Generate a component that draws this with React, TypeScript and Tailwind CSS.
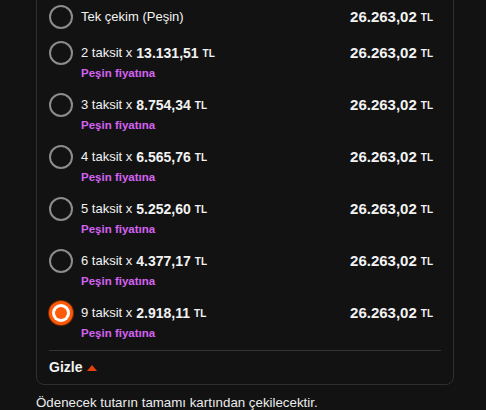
import React, { useState } from 'react';

type Option = {
    count: number;
    per?: string;
    total: string;
};

const options: Option[] = [
    { count: 1, total: '26.263,02' },
    { count: 2, per: '13.131,51', total: '26.263,02' },
    { count: 3, per: '8.754,34', total: '26.263,02' },
    { count: 4, per: '6.565,76', total: '26.263,02' },
    { count: 5, per: '5.252,60', total: '26.263,02' },
    { count: 6, per: '4.377,17', total: '26.263,02' },
    { count: 9, per: '2.918,11', total: '26.263,02' },
];

const Radio: React.FC<{ checked: boolean }> = ({ checked }) =>
    checked ? (
        <span className="flex h-6 w-6 shrink-0 items-center justify-center rounded-full bg-[#ff5a0a] ring-1 ring-[#7a2a00]">
            <span className="flex h-[18px] w-[18px] items-center justify-center rounded-full bg-white">
                <span className="h-3 w-3 rounded-full bg-[#ff5a0a]" />
            </span>
        </span>
    ) : (
        <span className="h-6 w-6 shrink-0 rounded-full border-2 border-[#8c8c8c]" />
    );

const App: React.FC = () => {
    const [selected, setSelected] = useState(9);

    return (
        <div className="min-h-screen bg-[#121212] text-[#f2f2f2] font-['Liberation_Sans',Arial,sans-serif]">
            <div className="ml-[36px] w-[418px] -mt-[20px]">
                <div className="rounded-lg border border-[#2f2f2f] px-3 pt-[24px]">
                    <div className="flex flex-col gap-3">
                        {options.map((o) => (
                            <button
                                key={o.count}
                                type="button"
                                onClick={() => setSelected(o.count)}
                                className="flex items-start gap-2 pr-2 text-left"
                            >
                                <Radio checked={selected === o.count} />
                                <div className="flex flex-1 flex-col">
                                    <span className="flex h-6 items-center gap-1 whitespace-pre text-[13px]">
                                        {o.per ? (
                                            <>
                                                <span>{o.count} taksit x</span>
                                                <b className="text-[14px]">{o.per}</b>
                                                <b className="text-[10px]">TL</b>
                                            </>
                                        ) : (
                                            'Tek çekim (Peşin)'
                                        )}
                                    </span>
                                    {o.per && (
                                        <span className="h-4 text-[11.5px] font-bold leading-4 text-[#d563f2]">Peşin fiyatına</span>
                                    )}
                                </div>
                                <span className="flex h-6 items-center gap-1">
                                    <b className="text-[15px]">{o.total}</b>
                                    <b className="text-[10px]">TL</b>
                                </span>
                            </button>
                        ))}
                    </div>
                    <div className="mt-[9px] border-t border-[#333333]" />
                    <button type="button" className="flex h-[33px] items-center gap-[5px] text-[14px] font-bold">
                        Gizle
                        <svg width="10" height="6" viewBox="0 0 10 6">
                            <path d="M0 6 L5 0 L10 6 Z" fill="#e8400c" />
                        </svg>
                    </button>
                </div>
                <p className="mt-2 text-[13.3px] leading-5 text-[#ececec]">Ödenecek tutarın tamamı kartından çekilecektir.</p>
            </div>
        </div>
    );
};

export default App;
